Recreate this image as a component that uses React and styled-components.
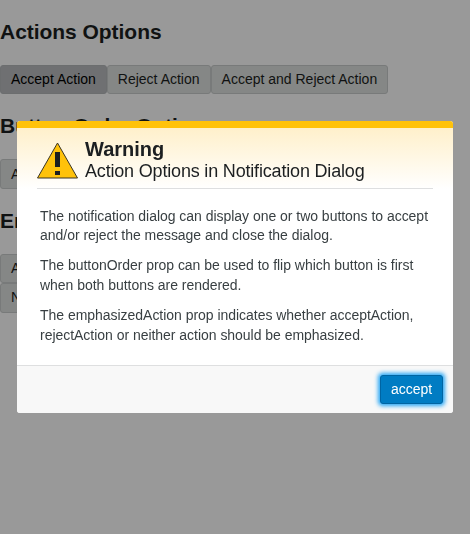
import React from 'react';
import styled, { createGlobalStyle } from 'styled-components';

const GlobalStyle = createGlobalStyle`
  html, body { margin: 0; padding: 0; background: #fff; }
  body {
    height: 534px;
    overflow: hidden;
    font-family: "Liberation Sans", Arial, Helvetica, sans-serif;
    font-size: 14px;
    color: #1c1f21;
  }
  *, *::before, *::after { box-sizing: border-box; }
`;

const Page = styled.main`
  height: 534px;
  padding-top: 17px;
`;

const SectionTitle = styled.h2`
  margin: 0 0 17.4px;
  font-size: 21px;
  line-height: 30.6px;
  font-weight: 700;
  letter-spacing: -0.04px;
  color: #1c1f21;
`;

const ButtonRow = styled.div`
  display: flex;
  flex-wrap: wrap;
  margin-bottom: 17px;
`;

const Button = styled.button`
  height: 29.4px;
  padding: 0 10px;
  border: 1px solid ${({ $selected }) => ($selected ? '#b4b7ba' : '#c8cccb')};
  border-radius: 3px;
  background: ${({ $selected }) => ($selected ? '#b9bbbe' : '#dee1e0')};
  color: ${({ $selected }) => ($selected ? '#000' : '#1c1f21')};
  font: inherit;
  line-height: 27px;
  white-space: nowrap;
`;

const Overlay = styled.div`
  position: fixed;
  inset: 0;
  padding: 121px 17px;
  background: rgba(0, 0, 0, 0.4);
`;

const Dialog = styled.section`
  display: flex;
  flex-direction: column;
  height: 292px;
  overflow: hidden;
  border-radius: 3px;
  background: #fff;
`;

const Header = styled.header`
  flex: none;
  height: 68px;
  padding: 0 20px;
  border-top: 7px solid #ffc20a;
  background: linear-gradient(#fff0cb, #fff);
`;

const HeaderContent = styled.div`
  display: flex;
  height: 61px;
  border-bottom: 1px solid #dedfe0;
`;

const WarningIcon = styled.svg`
  flex: none;
  width: 42px;
  height: 38px;
  margin: 14px 6px 0 0;
`;

const Title = styled.h3`
  margin: 9px 0 0;
  font-size: 20px;
  line-height: 24px;
  font-weight: 700;
`;

const Subtitle = styled.div`
  font-size: 18px;
  line-height: 20px;
  letter-spacing: -0.18px;
  white-space: nowrap;
`;

const Body = styled.div`
  flex: 1;
  padding: 17.7px 23px 0;
  color: #383f42;
  letter-spacing: -0.03px;
`;

const Paragraph = styled.p`
  margin: 0 0 10px;
  line-height: 19.8px;
  white-space: nowrap;
`;

const Footer = styled.footer`
  display: flex;
  flex: none;
  justify-content: flex-end;
  height: 48px;
  padding: 9px 10px;
  border-top: 1px solid #dedfe0;
  background: #f8f8f8;
`;

const AcceptButton = styled(Button)`
  width: 63px;
  height: 29px;
  border-color: #0065a3;
  background: #007cc3;
  color: #fff;
  box-shadow: 0 0 4px 1.5px #26a6f5;
`;

function WarningSymbol() {
  return (
    <WarningIcon viewBox="0 0 42 38" aria-hidden="true">
      <path d="M20.5 1 40.5 36H.5Z" fill="#ffc20a" stroke="#3a3524" />
      <path d="M18 10h5v15h-5zM18 29h5v4h-5z" fill="#1c1f21" />
    </WarningIcon>
  );
}

export default function App() {
  return (
    <>
      <GlobalStyle />
      <Page>
        <SectionTitle>Actions Options</SectionTitle>
        <ButtonRow>
          <Button $selected>Accept Action</Button>
          <Button>Reject Action</Button>
          <Button>Accept and Reject Action</Button>
        </ButtonRow>
        <SectionTitle>Button Order Options</SectionTitle>
        <ButtonRow>
          <Button>Accept First</Button>
          <Button>Reject First</Button>
        </ButtonRow>
        <SectionTitle>Emphasized Action Options</SectionTitle>
        <ButtonRow>
          <Button>Accept Action Emphasized</Button>
          <Button>Reject Action Emphasized</Button>
          <Button>No Action Emphasized</Button>
        </ButtonRow>
      </Page>
      <Overlay>
        <Dialog role="dialog" aria-label="Warning">
          <Header>
            <HeaderContent>
              <WarningSymbol />
              <div>
                <Title>Warning</Title>
                <Subtitle>Action Options in Notification Dialog</Subtitle>
              </div>
            </HeaderContent>
          </Header>
          <Body>
            <Paragraph>
              The notification dialog can display one or two buttons to accept<br />
              and/or reject the message and close the dialog.
            </Paragraph>
            <Paragraph>
              The buttonOrder prop can be used to flip which button is first<br />
              when both buttons are rendered.
            </Paragraph>
            <Paragraph>
              The emphasizedAction prop indicates whether acceptAction,<br />
              rejectAction or neither action should be emphasized.
            </Paragraph>
          </Body>
          <Footer>
            <AcceptButton>accept</AcceptButton>
          </Footer>
        </Dialog>
      </Overlay>
    </>
  );
}
